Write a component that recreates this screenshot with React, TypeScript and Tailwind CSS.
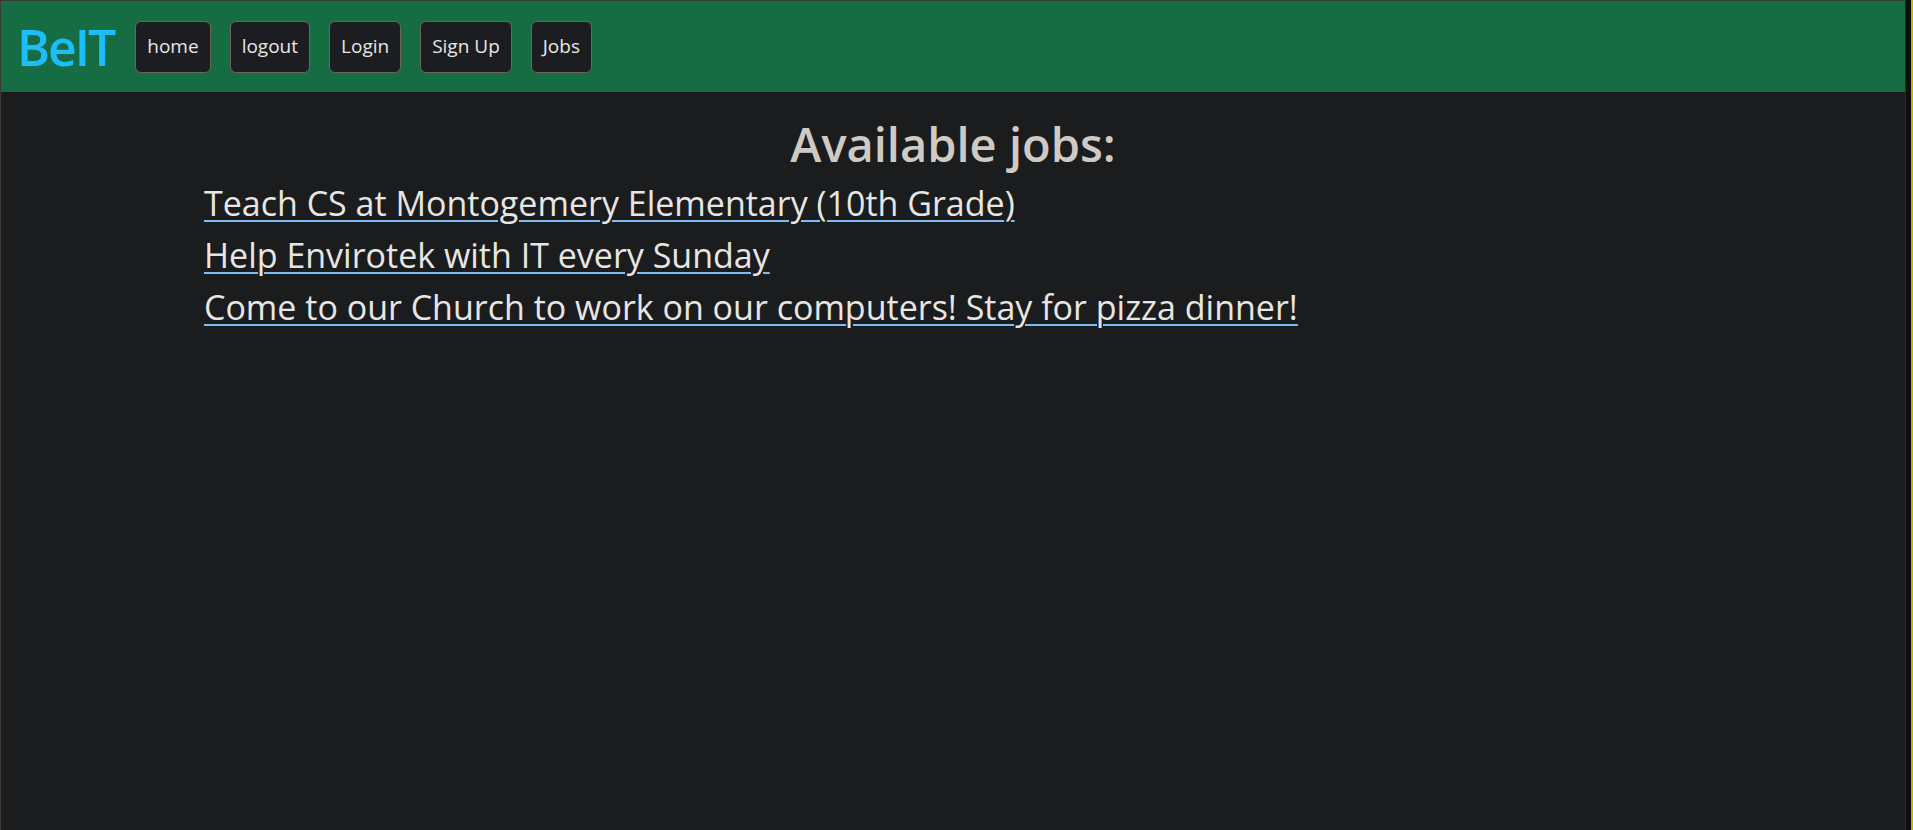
const font = { fontFamily: '"Open Sans", "Noto Sans", sans-serif' };

const navItems = ["home", "logout", "Login", "Sign Up", "Jobs"];

const jobs = [
  "Teach CS at Montogemery Elementary (10th Grade)",
  "Help Envirotek with IT every Sunday",
  "Come to our Church to work on our computers! Stay for pizza dinner!",
];

export default function App() {
  return (
    <div className="flex h-[830px] w-[1913px] overflow-hidden bg-[#1b1c1e]" style={font}>
      <div className="w-px bg-[#3a3a3a]" />
      <div className="flex flex-1 flex-col border-t border-[#3a3a3a]">
        <nav className="flex h-[91px] items-center gap-[19px] bg-[#176d43] pl-[16px]">
          <a href="#" className="mr-[2px] text-[50px] font-semibold leading-none tracking-[-2px] text-[#1bbefb]">
            BeIT
          </a>
          {navItems.map((item) => (
            <button
              key={item}
              className="h-[52px] rounded-md border border-[#6b655c] bg-[#1c1d21] px-[11px] text-[19px] text-[#e8e6e3]"
            >
              {item}
            </button>
          ))}
        </nav>
        <main className="flex-1">
          <h1 className="mt-[24px] text-center text-[47px] font-semibold leading-[1.2] text-[#cfcac3]">
            Available jobs:
          </h1>
          <ul className="mt-[5px] pl-[203px]">
            {jobs.map((job) => (
              <li key={job} className="text-[34px] leading-[52px]">
                <a
                  href="#"
                  className="text-[#e8e6e3] underline decoration-[#7fbcf5] decoration-2 underline-offset-[4px]"
                >
                  {job}
                </a>
              </li>
            ))}
          </ul>
        </main>
      </div>
      <div className="w-px bg-[#2a2a2a]" />
      <div className="w-[5px] bg-[#0e0e0e]" />
      <div className="w-[2px] bg-[#c8b400]" />
    </div>
  );
}
